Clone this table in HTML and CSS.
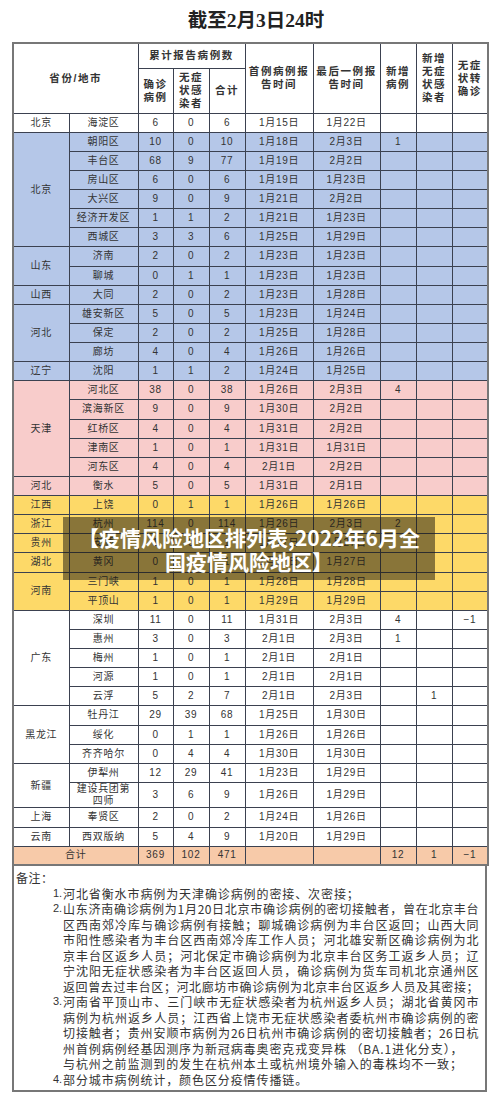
FILE: index.html
```html
<!DOCTYPE html>
<html lang="zh-CN">
<head>
<meta charset="utf-8">
<title>截至2月3日24时</title>
<link rel="stylesheet" href="styles.css">
</head>
<body>
<div class="page">
  <h1 class="title">截至2月3日24时</h1>
  <table class="data">
    <colgroup>
      <col class="c-prov"><col class="c-city"><col class="c-n1"><col class="c-n2"><col class="c-n3">
      <col class="c-d1"><col class="c-d2"><col class="c-n4"><col class="c-n5"><col class="c-n6">
    </colgroup>
    <thead>
      <tr class="h1">
        <th colspan="2" rowspan="2">省份/地市</th>
        <th colspan="3">累计报告病例数</th>
        <th rowspan="2">首例病例报<br>告时间</th>
        <th rowspan="2">最后一例报<br>告时间</th>
        <th rowspan="2">新增<br>病例</th>
        <th rowspan="2">新增<br>无症<br>状感<br>染者</th>
        <th rowspan="2">无症<br>状转<br>确诊</th>
      </tr>
      <tr class="h2">
        <th>确诊<br>病例</th>
        <th>无症<br>状感<br>染者</th>
        <th>合计</th>
      </tr>
    </thead>
    <tbody>
      <tr><td>北京</td><td>海淀区</td><td>6</td><td>0</td><td>6</td><td>1月15日</td><td>1月22日</td><td></td><td></td><td></td></tr>

      <tr class="b"><td rowspan="6">北京</td><td>朝阳区</td><td>10</td><td>0</td><td>10</td><td>1月18日</td><td>2月3日</td><td>1</td><td></td><td></td></tr>
      <tr class="b"><td>丰台区</td><td>68</td><td>9</td><td>77</td><td>1月19日</td><td>2月2日</td><td></td><td></td><td></td></tr>
      <tr class="b"><td>房山区</td><td>6</td><td>0</td><td>6</td><td>1月19日</td><td>1月23日</td><td></td><td></td><td></td></tr>
      <tr class="b"><td>大兴区</td><td>9</td><td>0</td><td>9</td><td>1月21日</td><td>2月2日</td><td></td><td></td><td></td></tr>
      <tr class="b"><td>经济开发区</td><td>1</td><td>1</td><td>2</td><td>1月21日</td><td>1月23日</td><td></td><td></td><td></td></tr>
      <tr class="b"><td>西城区</td><td>3</td><td>3</td><td>6</td><td>1月25日</td><td>1月29日</td><td></td><td></td><td></td></tr>
      <tr class="b"><td rowspan="2">山东</td><td>济南</td><td>2</td><td>0</td><td>2</td><td>1月23日</td><td>1月23日</td><td></td><td></td><td></td></tr>
      <tr class="b"><td>聊城</td><td>0</td><td>1</td><td>1</td><td>1月23日</td><td>1月23日</td><td></td><td></td><td></td></tr>
      <tr class="b"><td>山西</td><td>大同</td><td>2</td><td>0</td><td>2</td><td>1月23日</td><td>1月28日</td><td></td><td></td><td></td></tr>
      <tr class="b"><td rowspan="3">河北</td><td>雄安新区</td><td>5</td><td>0</td><td>5</td><td>1月23日</td><td>1月24日</td><td></td><td></td><td></td></tr>
      <tr class="b"><td>保定</td><td>2</td><td>0</td><td>2</td><td>1月25日</td><td>1月28日</td><td></td><td></td><td></td></tr>
      <tr class="b"><td>廊坊</td><td>4</td><td>0</td><td>4</td><td>1月26日</td><td>1月26日</td><td></td><td></td><td></td></tr>
      <tr class="b"><td>辽宁</td><td>沈阳</td><td>1</td><td>1</td><td>2</td><td>1月24日</td><td>1月25日</td><td></td><td></td><td></td></tr>

      <tr class="p"><td rowspan="5">天津</td><td>河北区</td><td>38</td><td>0</td><td>38</td><td>1月26日</td><td>2月3日</td><td>4</td><td></td><td></td></tr>
      <tr class="p"><td>滨海新区</td><td>9</td><td>0</td><td>9</td><td>1月30日</td><td>2月2日</td><td></td><td></td><td></td></tr>
      <tr class="p"><td>红桥区</td><td>4</td><td>0</td><td>4</td><td>1月31日</td><td>2月2日</td><td></td><td></td><td></td></tr>
      <tr class="p"><td>津南区</td><td>1</td><td>0</td><td>1</td><td>1月31日</td><td>1月31日</td><td></td><td></td><td></td></tr>
      <tr class="p"><td>河东区</td><td>4</td><td>0</td><td>4</td><td>2月1日</td><td>2月2日</td><td></td><td></td><td></td></tr>
      <tr class="p"><td>河北</td><td>衡水</td><td>5</td><td>0</td><td>5</td><td>1月31日</td><td>2月1日</td><td></td><td></td><td></td></tr>

      <tr class="y"><td>江西</td><td>上饶</td><td>0</td><td>1</td><td>1</td><td>1月26日</td><td>1月26日</td><td></td><td></td><td></td></tr>
      <tr class="y"><td>浙江</td><td>杭州</td><td>114</td><td>0</td><td>114</td><td>1月26日</td><td>2月3日</td><td>2</td><td></td><td></td></tr>
      <tr class="y"><td>贵州</td><td>安顺</td><td>1</td><td>0</td><td>1</td><td>1月27日</td><td>1月27日</td><td></td><td></td><td></td></tr>
      <tr class="y"><td>湖北</td><td>黄冈</td><td>0</td><td>1</td><td>1</td><td>1月27日</td><td>1月27日</td><td></td><td></td><td></td></tr>
      <tr class="y"><td rowspan="2">河南</td><td>三门峡</td><td>1</td><td>0</td><td>1</td><td>1月28日</td><td>1月28日</td><td></td><td></td><td></td></tr>
      <tr class="y"><td>平顶山</td><td>1</td><td>0</td><td>1</td><td>1月29日</td><td>1月29日</td><td></td><td></td><td></td></tr>

      <tr><td rowspan="5">广东</td><td>深圳</td><td>11</td><td>0</td><td>11</td><td>1月31日</td><td>2月3日</td><td>4</td><td></td><td>−1</td></tr>
      <tr><td>惠州</td><td>3</td><td>0</td><td>3</td><td>2月1日</td><td>2月3日</td><td>1</td><td></td><td></td></tr>
      <tr><td>梅州</td><td>1</td><td>0</td><td>1</td><td>2月1日</td><td>2月1日</td><td></td><td></td><td></td></tr>
      <tr><td>河源</td><td>1</td><td>0</td><td>1</td><td>2月1日</td><td>2月1日</td><td></td><td></td><td></td></tr>
      <tr><td>云浮</td><td>5</td><td>2</td><td>7</td><td>2月1日</td><td>2月3日</td><td></td><td>1</td><td></td></tr>
      <tr><td rowspan="3">黑龙江</td><td>牡丹江</td><td>29</td><td>39</td><td>68</td><td>1月25日</td><td>1月30日</td><td></td><td></td><td></td></tr>
      <tr><td>绥化</td><td>0</td><td>1</td><td>1</td><td>1月26日</td><td>1月26日</td><td></td><td></td><td></td></tr>
      <tr><td>齐齐哈尔</td><td>0</td><td>4</td><td>4</td><td>1月30日</td><td>1月30日</td><td></td><td></td><td></td></tr>
      <tr><td rowspan="2">新疆</td><td>伊犁州</td><td>12</td><td>29</td><td>41</td><td>1月23日</td><td>1月29日</td><td></td><td></td><td></td></tr>
      <tr class="tall"><td class="wrap">建设兵团第<br>四师</td><td>3</td><td>6</td><td>9</td><td>1月26日</td><td>1月29日</td><td></td><td></td><td></td></tr>
      <tr><td>上海</td><td>奉贤区</td><td>2</td><td>0</td><td>2</td><td>1月24日</td><td>1月26日</td><td></td><td></td><td></td></tr>
      <tr><td>云南</td><td>西双版纳</td><td>5</td><td>4</td><td>9</td><td>1月20日</td><td>1月29日</td><td></td><td></td><td></td></tr>
      <tr class="total"><td colspan="2">合计</td><td>369</td><td>102</td><td>471</td><td></td><td></td><td>12</td><td>1</td><td>−1</td></tr>
    </tbody>
  </table>

  <div class="notes">
    <div class="notes-label">备注：</div>
    <ol class="note-list">
      <li class="note"><span class="num">1.</span><div class="lines"><div class="ln">河北省衡水市病例为天津确诊病例的密接、次密接；</div></div></li>
      <li class="note"><span class="num">2.</span><div class="lines">
        <div class="ln full">山东济南确诊病例为1月20日北京市确诊病例的密切接触者，曾在北京丰台</div>
        <div class="ln full">区西南郊冷库与确诊病例有接触；聊城确诊病例为丰台区返回；山西大同</div>
        <div class="ln full">市阳性感染者为丰台区西南郊冷库工作人员；河北雄安新区确诊病例为北</div>
        <div class="ln full">京丰台区返乡人员；河北保定市确诊病例为北京丰台区务工返乡人员；辽</div>
        <div class="ln full">宁沈阳无症状感染者为丰台区返回人员，确诊病例为货车司机北京通州区</div>
        <div class="ln full">返回曾去过丰台区；河北廊坊市确诊病例为北京丰台区返乡人员及其密接；</div>
      </div></li>
      <li class="note"><span class="num">3.</span><div class="lines">
        <div class="ln full">河南省平顶山市、三门峡市无症状感染者为杭州返乡人员；湖北省黄冈市</div>
        <div class="ln full">病例为杭州返乡人员；江西省上饶市无症状感染者委杭州市确诊病例的密</div>
        <div class="ln full">切接触者；贵州安顺市病例为26日杭州市确诊病例的密切接触者；26日杭</div>
        <div class="ln">州首例病例经基因测序为新冠病毒奥密克戎变异株 （BA.1进化分支），</div>
        <div class="ln">与杭州之前监测到的发生在杭州本土或杭州境外输入的毒株均不一致；</div>
      </div></li>
      <li class="note"><span class="num">4.</span><div class="lines"><div class="ln">部分城市病例统计，颜色区分疫情传播链。</div></div></li>
    </ol>
  </div>

  <div class="overlay">【疫情风险地区排列表,2022年6月全<br>国疫情风险地区】</div>
</div>
</body>
</html>
```

FILE: styles.css
```css
* { box-sizing: border-box; }
html, body { margin: 0; padding: 0; background: #ffffff; }
body {
  font-family: "Liberation Sans", "Noto Sans CJK SC", sans-serif;
  color: #333333;
}
.page {
  position: relative;
  width: 500px;
  height: 1098px;
  padding-left: 12px;
  overflow: hidden;
}
.title {
  margin: 0;
  height: 42px;
  text-align: center;
  font-family: "Liberation Serif", "Noto Sans CJK SC", serif;
  font-weight: bold;
  font-size: 19.5px;
  line-height: 42px;
  color: #222222;
}

.data {
  width: 475px;
  border-collapse: collapse;
  table-layout: fixed;
  border: 2px solid #777777;
  font-size: 10px;
}
.c-prov { width: 56px; }
.c-city { width: 69px; }
.c-n1 { width: 35px; }
.c-n2, .c-n3 { width: 36px; }
.c-d1 { width: 68px; }
.c-d2 { width: 67px; }
.c-n4, .c-n5, .c-n6 { width: 36px; }

.data th, .data td {
  border: 1px solid #3b4150;
  padding: 0;
  text-align: center;
  vertical-align: middle;
  letter-spacing: 0.7px;
  white-space: nowrap;
}
.data th {
  font-weight: bold;
  font-size: 10.5px;
  line-height: 13px;
  letter-spacing: 1.6px;
  color: #333333;
}
.data tr.h1 { height: 25px; }
.data tr.h2 { height: 45px; }
.data tbody tr { height: 19.13px; }
.data tbody td { line-height: 12px; }
.data tbody tr.tall { height: 25.5px; }
.data td.wrap { line-height: 12px; }

.data tr.b td { background: #b5c7e8; }
.data tr.p td { background: #f8cccb; }
.data tr.y td { background: #fdd968; }
.data tr.total td { background: #f7caa9; height: 18px; }

.notes {
  width: 475px;
  border: 2px solid #777777;
  border-top: none;
  padding: 4px 0 3px 2px;
  font-family: "Noto Sans CJK SC", sans-serif;
  font-size: 12px;
  line-height: 15.5px;
  color: #333333;
}
.notes-label { letter-spacing: 0.5px; }
.note-list {
  list-style: none;
  margin: 0;
  padding: 0 0 0 37px;
}
.note { display: flex; }
.num {
  width: 10px;
  flex: none;
  font-family: "Liberation Sans", sans-serif;
  font-size: 11px;
}
.lines { width: 416px; }
.ln {
  white-space: nowrap;
  letter-spacing: 0.9px;
}
.ln.full {
  text-align: justify;
  text-align-last: justify;
  letter-spacing: 0.4px;
}

.overlay {
  position: absolute;
  left: 63px;
  top: 517px;
  width: 372px;
  height: 63px;
  padding-top: 8px;
  background: rgba(30, 25, 15, 0.52);
  color: #ffffff;
  text-align: center;
  font-family: "Noto Sans CJK SC", sans-serif;
  font-weight: bold;
  font-size: 21px;
  line-height: 24px;
}
```
